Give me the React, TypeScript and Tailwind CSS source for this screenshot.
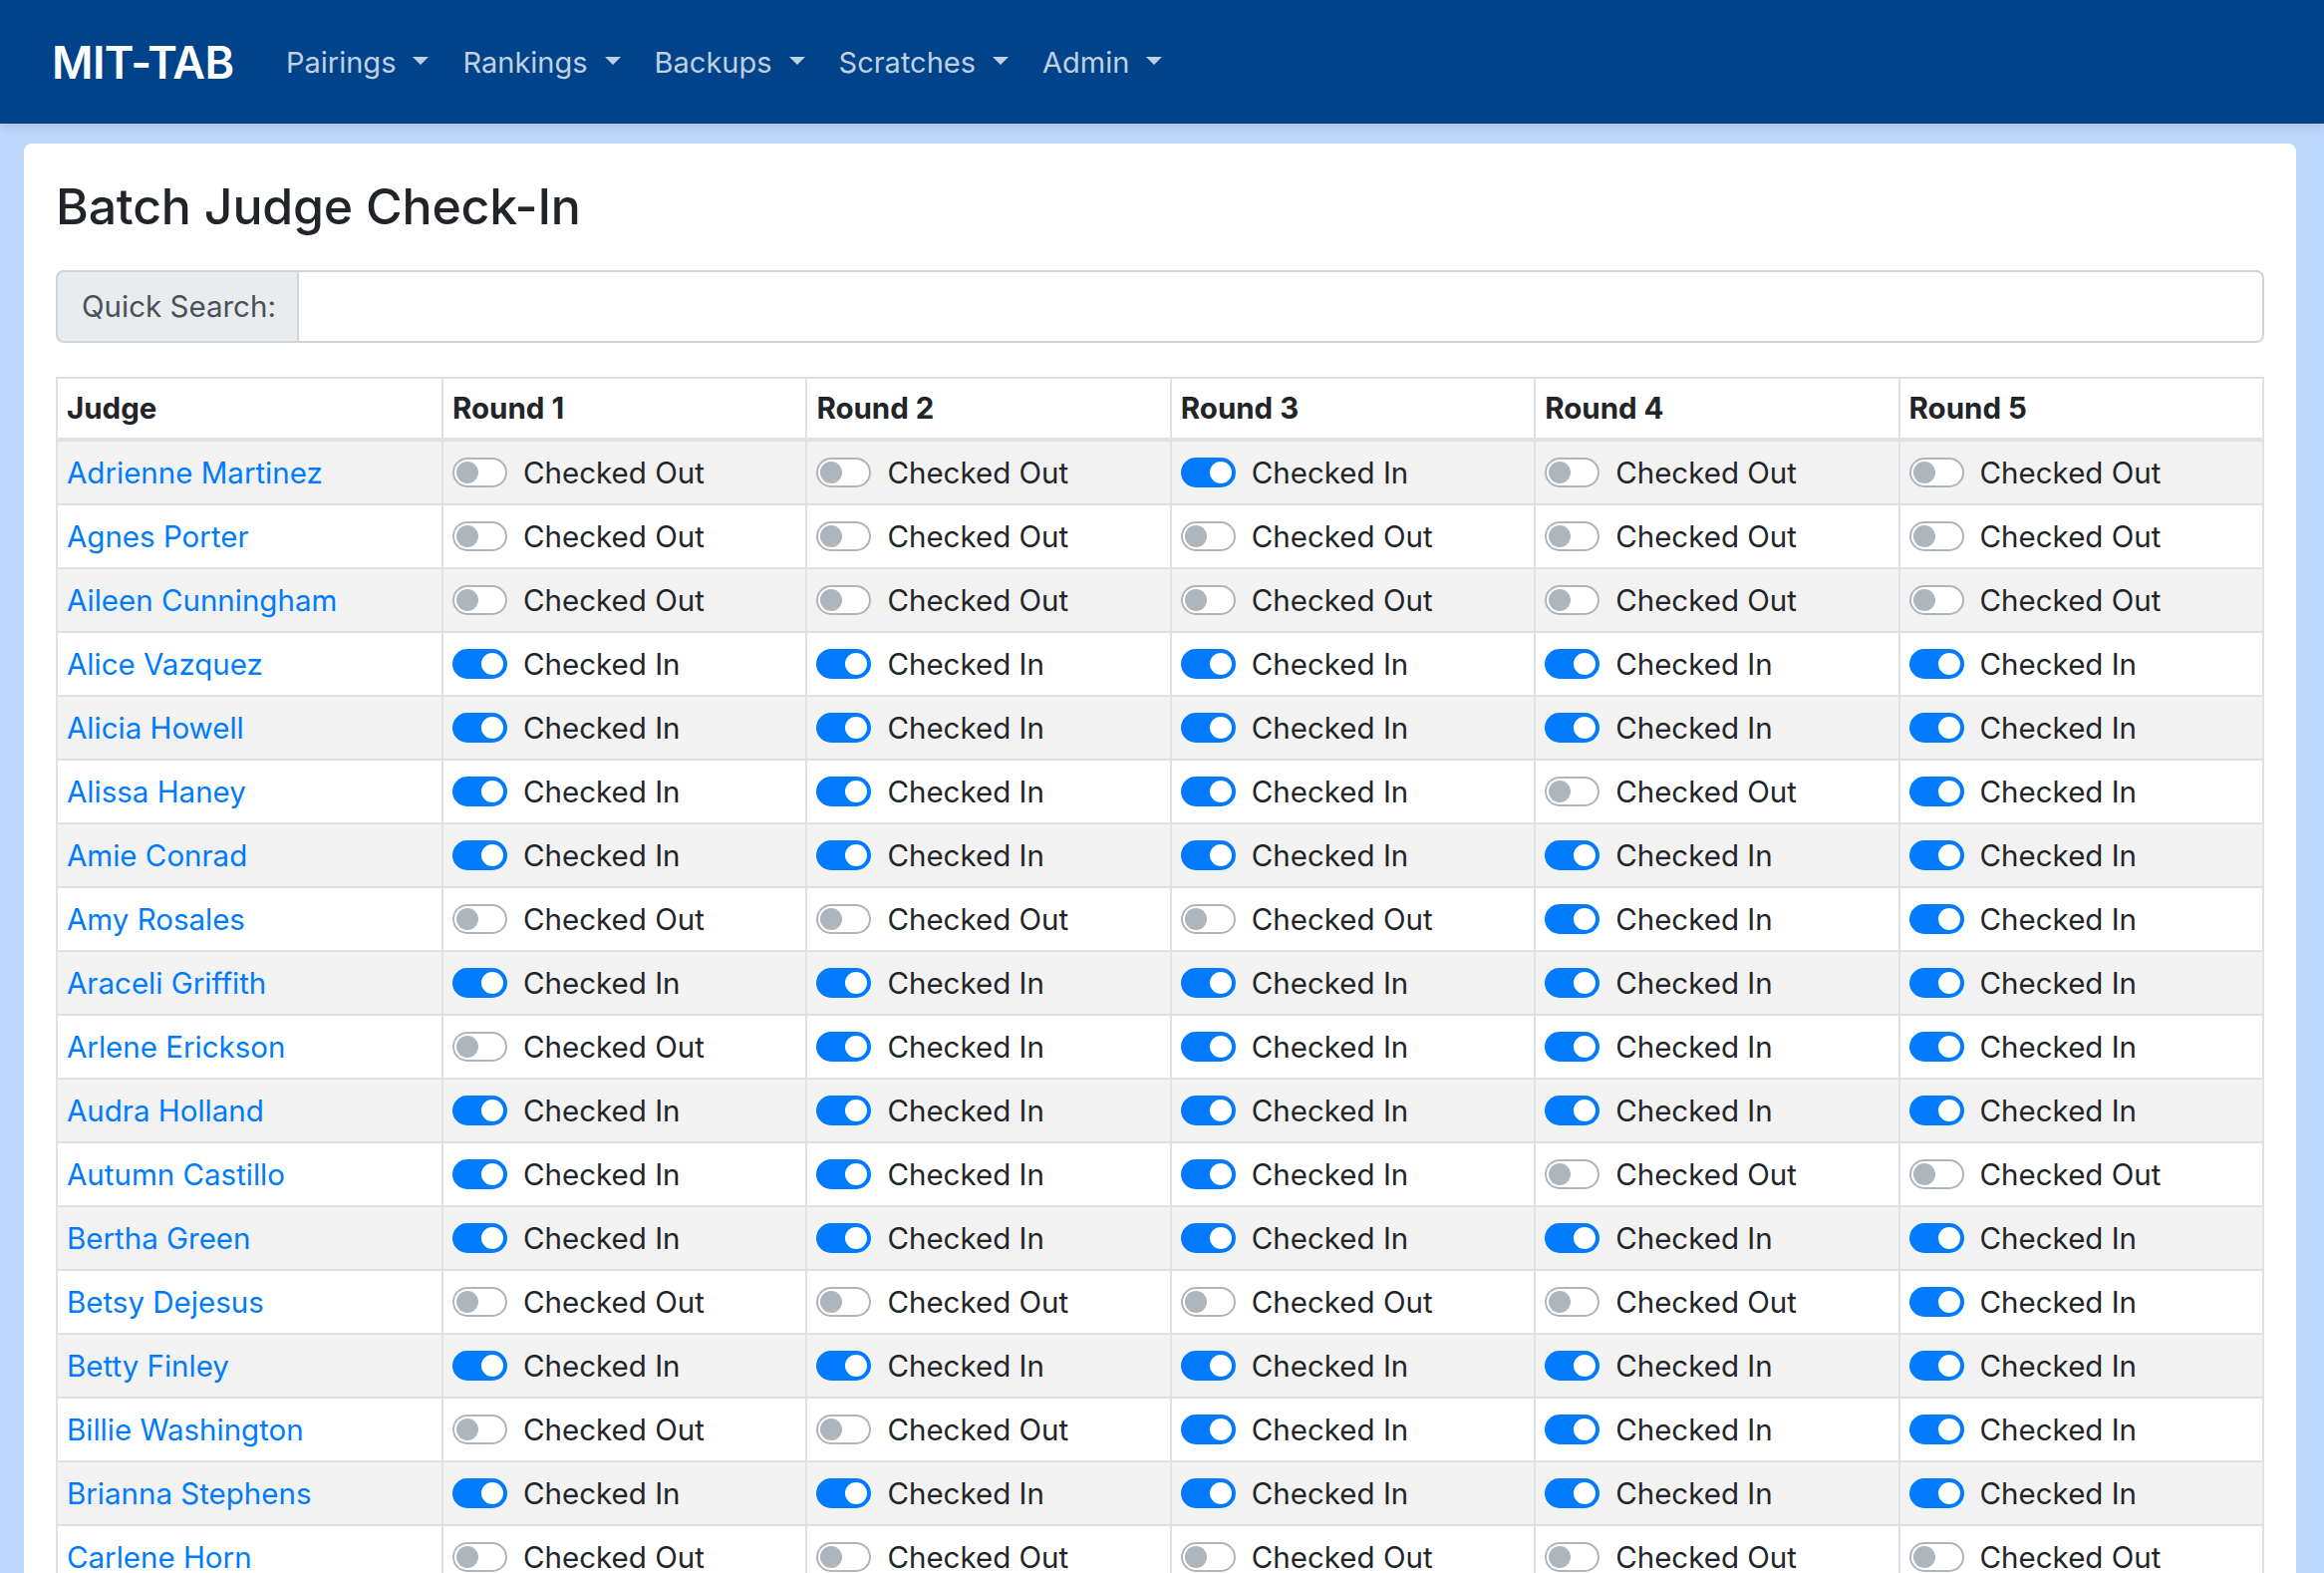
import React from "react";

type Row = { name: string; s: string };

const rows: Row[] = [
  { name: "Adrienne Martinez", s: "00100" },
  { name: "Agnes Porter", s: "00000" },
  { name: "Aileen Cunningham", s: "00000" },
  { name: "Alice Vazquez", s: "11111" },
  { name: "Alicia Howell", s: "11111" },
  { name: "Alissa Haney", s: "11101" },
  { name: "Amie Conrad", s: "11111" },
  { name: "Amy Rosales", s: "00011" },
  { name: "Araceli Griffith", s: "11111" },
  { name: "Arlene Erickson", s: "01111" },
  { name: "Audra Holland", s: "11111" },
  { name: "Autumn Castillo", s: "11100" },
  { name: "Bertha Green", s: "11111" },
  { name: "Betsy Dejesus", s: "00001" },
  { name: "Betty Finley", s: "11111" },
  { name: "Billie Washington", s: "00111" },
  { name: "Brianna Stephens", s: "11111" },
  { name: "Carlene Horn", s: "00000" },
];

const navItems = ["Pairings", "Rankings", "Backups", "Scratches", "Admin"];

function Toggle({ on }: { on: boolean }) {
  return (
    <div className="flex items-center gap-[16px] whitespace-nowrap">
      <div
        className={
          on
            ? "w-[55px] h-[30px] rounded-full border-2 border-[#007bff] bg-[#007bff] flex items-center justify-end px-[2px] shrink-0"
            : "w-[55px] h-[30px] rounded-full border-2 border-[#adb5bd] bg-white flex items-center justify-start px-[2px] shrink-0"
        }
      >
        <div
          className={
            on
              ? "w-[22px] h-[22px] rounded-full bg-white"
              : "w-[22px] h-[22px] rounded-full bg-[#adb5bd]"
          }
        />
      </div>
      <span>{on ? "Checked In" : "Checked Out"}</span>
    </div>
  );
}

export default function App() {
  return (
    <div className="w-[2332px] h-[1578px] overflow-hidden bg-[#bed8fb] font-['Inter','Liberation_Sans',sans-serif] text-[#212529] text-[29.5px] leading-[45px]">
      <nav className="relative z-10 h-[124px] bg-[#00438a] flex items-center pl-[52px] shadow-[0_3px_12px_rgba(0,0,0,0.12)]">
        <div className="w-[182px] shrink-0 whitespace-nowrap text-white text-[45px] font-semibold leading-none tracking-[-0.6px]">
          MIT-TAB
        </div>
        <ul className="flex items-center ml-[53px] gap-[34px] text-[rgba(255,255,255,0.75)] text-[29px] whitespace-nowrap">
          {navItems.map((n) => (
            <li key={n} className="flex items-center">
              <span>{n}</span>
              <span className="ml-[17px] mb-[2px] inline-block w-0 h-0 border-x-[8px] border-x-transparent border-t-[8px] border-t-[#bfd0e2]" />
            </li>
          ))}
        </ul>
      </nav>
      <div className="pt-[20px] pl-[24px] pr-[28px]">
        <div className="bg-white rounded-[8px] px-[32px] pt-[32px] pb-[40px]">
          <h3 className="text-[50px] leading-[63px] font-medium tracking-[-0.2px] mb-[32px]">
            Batch Judge Check-In
          </h3>
          <div className="flex h-[73px] mb-[34px]">
            <div className="flex items-center px-[24px] bg-[#e9ecef] border-2 border-[#ced4da] rounded-l-[8px] text-[#495057] shrink-0 w-[244px] whitespace-nowrap">
              Quick Search:
            </div>
            <div className="flex-1 border-2 border-l-0 border-[#ced4da] rounded-r-[8px] bg-white" />
          </div>
          <table className="w-full table-fixed border-collapse">
            <colgroup>
              <col className="w-[387px]" />
              <col />
              <col />
              <col />
              <col />
              <col />
            </colgroup>
            <thead>
              <tr>
                <th className="text-left font-bold px-[9px] py-[7px] border-2 border-b-4 border-[#dee2e6]">
                  Judge
                </th>
                {[1, 2, 3, 4, 5].map((r) => (
                  <th
                    key={r}
                    className="text-left font-bold px-[9px] py-[7px] border-2 border-b-4 border-[#dee2e6]"
                  >
                    Round {r}
                  </th>
                ))}
              </tr>
            </thead>
            <tbody>
              {rows.map((row, i) => (
                <tr key={row.name} className={i % 2 === 0 ? "bg-[#f2f2f2]" : "bg-white"}>
                  <td className="px-[9px] py-[8.5px] border-2 border-[#dee2e6] text-[#007bff] whitespace-nowrap">
                    {row.name}
                  </td>
                  {row.s.split("").map((c, j) => (
                    <td key={j} className="px-[9px] py-[8.5px] border-2 border-[#dee2e6]">
                      <Toggle on={c === "1"} />
                    </td>
                  ))}
                </tr>
              ))}
            </tbody>
          </table>
        </div>
      </div>
    </div>
  );
}
